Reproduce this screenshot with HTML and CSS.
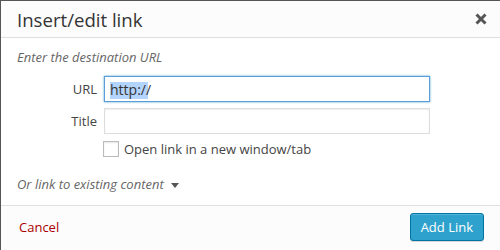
FILE: index.html
```html
<!DOCTYPE html>
<html lang="en">
<head>
    <meta charset="UTF-8">
    <title>Insert/edit link</title>
    <link rel="stylesheet" href="styles.css">
</head>
<body>
    <div class="dialog">
        <div class="header">
            <h1>Insert/edit link</h1>
            <button class="close" aria-label="Close">
                <svg width="12" height="12" viewBox="0 0 12 12"><path d="M1.5 1.5 L10.5 10.5 M10.5 1.5 L1.5 10.5" stroke="#555" stroke-width="3"/></svg>
            </button>
        </div>

        <div class="body">
            <p class="hint">Enter the destination URL</p>
            <div class="row">
                <label for="url">URL</label>
                <input type="text" id="url" class="field focused" value="http://">
            </div>
            <div class="row">
                <label for="title">Title</label>
                <input type="text" id="title" class="field">
            </div>
            <div class="row check-row">
                <span class="box"></span>
                <span>Open link in a new window/tab</span>
            </div>
            <p class="existing">Or link to existing content <span class="arrow"></span></p>
        </div>

        <div class="footer">
            <a href="#" class="cancel">Cancel</a>
            <button class="add-btn">Add Link</button>
        </div>
    </div>
</body>
</html>
```

FILE: styles.css
```css
* {
    box-sizing: border-box;
    margin: 0;
    padding: 0;
}

body {
    width: 500px;
    height: 250px;
    overflow: hidden;
    font-family: 'Open Sans', sans-serif;
    background: #fff;
}

.dialog {
    height: 250px;
    border-top: 1px solid #555;
    border-left: 1px solid #555;
    display: flex;
    flex-direction: column;
}

.header {
    height: 37px;
    background: #fcfcfc;
    border-bottom: 1px solid #dfdfdf;
    display: flex;
    align-items: center;
    justify-content: space-between;
    padding: 0 11px 0 16px;
}

.header h1 {
    font-size: 18.6px;
    font-weight: 400;
    color: #333;
}

.close {
    border: none;
    background: none;
    width: 16px;
    height: 16px;
    display: flex;
    align-items: center;
    justify-content: center;
}

.body {
    flex: 1;
    padding: 10px 16px 0;
    font-size: 13px;
    color: #555;
}

.hint {
    font-style: italic;
    color: #666;
    margin-bottom: 10px;
}

.row {
    display: flex;
    align-items: center;
    margin-bottom: 6px;
}

.row label {
    width: 87px;
    text-align: right;
    padding-right: 7px;
    color: #444;
}

.field {
    width: 326px;
    height: 26px;
    border: 1px solid #ddd;
    font-family: 'Open Sans', sans-serif;
    font-size: 14px;
    color: #333;
    padding: 0 5px;
    box-shadow: inset 0 1px 2px rgba(0, 0, 0, 0.07);
}

.focused {
    border-color: #5b9dd9;
    box-shadow: 0 0 2px rgba(30, 140, 190, 0.8);
    background: linear-gradient(#b3d4fc, #b3d4fc) no-repeat 5px 5px / 38px 17px;
}

.check-row {
    padding-left: 86px;
    margin-top: 2px;
    color: #444;
}

.box {
    width: 16px;
    height: 16px;
    border: 1px solid #bbb;
    box-shadow: inset 0 1px 2px rgba(0, 0, 0, 0.1);
    margin-right: 5px;
}

.existing {
    font-style: italic;
    color: #666;
    margin-top: 17px;
}

.arrow {
    display: inline-block;
    border-left: 4px solid transparent;
    border-right: 4px solid transparent;
    border-top: 5px solid #555;
    margin-left: 4px;
    vertical-align: middle;
}

.footer {
    height: 45px;
    background: #fcfcfc;
    border-top: 1px solid #dfdfdf;
    display: flex;
    align-items: center;
    justify-content: space-between;
    padding: 0 16px 3px 18px;
}

.cancel {
    color: #a00;
    text-decoration: none;
    font-size: 13px;
}

.add-btn {
    background: #2ea2cc;
    border: 1px solid #0074a2;
    border-radius: 3px;
    color: #fff;
    font-family: 'Open Sans', sans-serif;
    font-size: 13px;
    height: 28px;
    padding: 0 10px;
    box-shadow: inset 0 1px 0 rgba(120, 200, 230, 0.5), 0 1px 0 rgba(0, 0, 0, 0.15);
}
```
